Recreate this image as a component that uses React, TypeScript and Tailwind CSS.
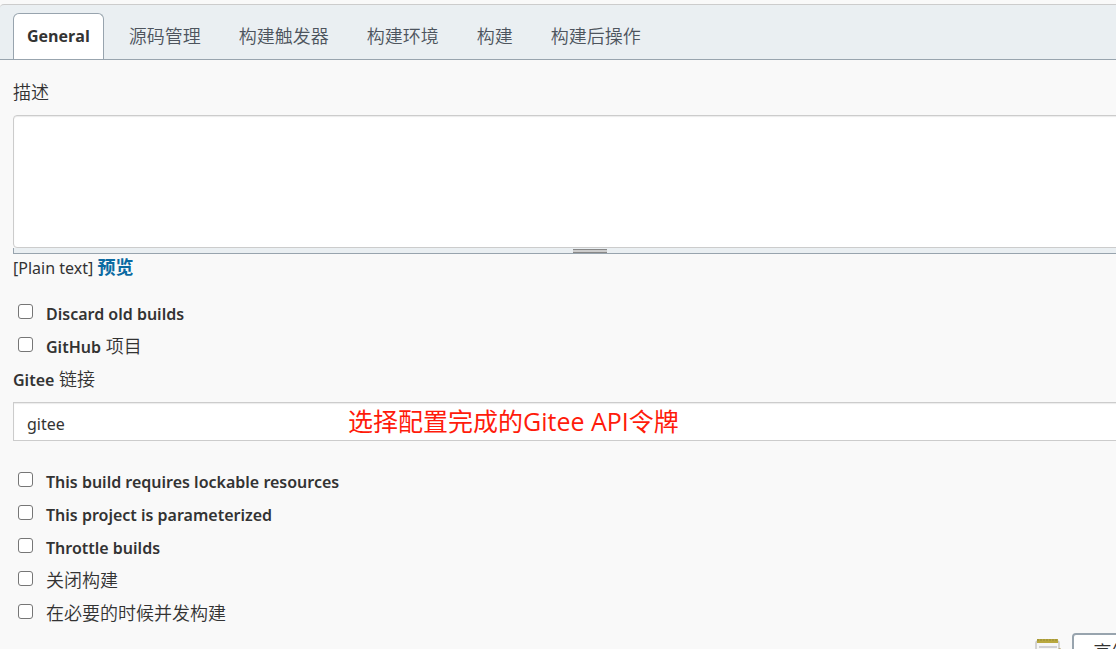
import React, { useState } from 'react';
import clsx from 'clsx';

const TABS = ['General', '源码管理', '构建触发器', '构建环境', '构建', '构建后操作'];

interface OptionProps {
    id: string;
    label: string;
    suffix?: string;
}

const Cjk: React.FC<{ children: React.ReactNode }> = ({ children }) => (
    <span className="text-[18px] font-[350]">{children}</span>
);

const Option: React.FC<OptionProps> = ({ id, label, suffix }) => (
    <div className="flex h-[33px] items-center pl-[5px]">
        <input
            id={id}
            type="checkbox"
            className="mb-1 h-[15px] w-[15px] shrink-0 appearance-none rounded-[3px] border border-[#767676] bg-white checked:bg-[#0b6aa2]"
        />
        <label htmlFor={id} className="pl-[13px] font-semibold">
            {label}
            {suffix && <Cjk>{label && ' '}{suffix}</Cjk>}
        </label>
    </div>
);

const NotepadIcon: React.FC = () => (
    <svg width="26" height="26" viewBox="0 0 26 26" aria-hidden="true">
        <rect x="1" y="2" width="23" height="23" rx="2" fill="#f6f6f6" stroke="#c8c8c8" strokeWidth="1.5" />
        <path d="M4 8h18M4 12h18M4 16h18M4 20h18" stroke="#d0d0d4" strokeWidth="2" />
        <rect x="2" y="0" width="21" height="4" fill="#b9a83f" />
        <path d="M2 1h21" stroke="#958a35" strokeDasharray="2 1" />
        <path d="M23 10l2-1 1 1-3 4z" fill="#b5a060" />
    </svg>
);

const App: React.FC = () => {
    const [activeTab, setActiveTab] = useState('General');
    const [description, setDescription] = useState('');

    return (
        <div className="h-screen overflow-hidden bg-[#f9f9f9] pt-1 font-['Noto_Sans','Noto_Sans_CJK_SC',sans-serif] text-base leading-6 text-[#333]">
            {/* Tab bar */}
            <nav className="flex h-14 items-end rounded-tl border-t border-b border-t-[#ccc] border-b-[#98a4ae] bg-[#eaeff2] pl-[13px]">
                {TABS.map(tab => (
                    <button
                        key={tab}
                        type="button"
                        onClick={() => setActiveTab(tab)}
                        className={clsx(
                            "h-[46px] whitespace-nowrap rounded-t-md border border-b-0 px-[13px] pb-px font-['Open_Sans','Noto_Sans_CJK_SC',sans-serif]",
                            tab === activeTab ? 'mr-[11px] border-[#98a4ae] bg-white font-bold text-[#333]' : 'mr-[10px] border-transparent text-[18px] font-[350] text-[#4d545d]'
                        )}
                    >
                        {tab}
                    </button>
                ))}
            </nav>

            <form className="-mr-[50px] pl-[13px]">
                {/* Description */}
                <label htmlFor="description" className="block pt-5 pb-[11px] text-[18px] font-[350]">描述</label>
                <textarea
                    id="description"
                    value={description}
                    onChange={e => setDescription(e.target.value)}
                    className="block h-[133px] w-full resize-none rounded border border-[#ccc] bg-white px-3 py-2 shadow-[inset_0_1px_1px_rgba(0,0,0,0.08)] outline-none"
                />
                <div className="flex h-[6px] items-end justify-center border-b border-l border-[#98a4ae] bg-[#eaeff2]">
                    <div className="h-1 w-[34px] border-y border-[#888] bg-[#ccc]" />
                </div>
                <div className="pt-px">
                    <span>[Plain text]</span>{' '}
                    <a href="#preview" className="text-[18px] font-bold text-[#0b6aa2]">预览</a>
                </div>

                <div className="pt-[17px]">
                    <Option id="discard" label="Discard old builds" />
                    <Option id="github" label="GitHub" suffix="项目" />
                </div>

                {/* Gitee connection */}
                <label htmlFor="gitee" className="block h-[39px] pt-1 font-semibold">
                    Gitee<Cjk> 链接</Cjk>
                </label>
                <div className="relative">
                    <select
                        id="gitee"
                        className="block h-[39px] w-full appearance-none border border-[#ccc] bg-white px-[13px] pt-[5px] text-[#333] shadow-[inset_0_1px_1px_rgba(0,0,0,0.08)] outline-none"
                    >
                        <option>gitee</option>
                    </select>
                    <span className="pointer-events-none absolute top-0 left-[335px] whitespace-nowrap font-['Open_Sans','Noto_Sans_CJK_SC',sans-serif] text-[25px] leading-[39px] text-[#ff1b0b]">
                        选择配置完成的Gitee API令牌
                    </span>
                </div>

                <div className="pt-6">
                    <Option id="lockable" label="This build requires lockable resources" />
                    <Option id="parameterized" label="This project is parameterized" />
                    <Option id="throttle" label="Throttle builds" />
                    <Option id="disable" label="" suffix="关闭构建" />
                    <Option id="concurrent" label="" suffix="在必要的时候并发构建" />
                </div>

                <div className="flex items-start justify-end gap-[11px] pt-[3px]">
                    <div className="pt-[6px]">
                        <NotepadIcon />
                    </div>
                    <button
                        type="button"
                        className="h-[38px] whitespace-nowrap rounded border-2 border-[#98a4ae] bg-white px-5 text-[18px]"
                    >
                        高级...
                    </button>
                </div>
            </form>
        </div>
    );
};

export default App;
